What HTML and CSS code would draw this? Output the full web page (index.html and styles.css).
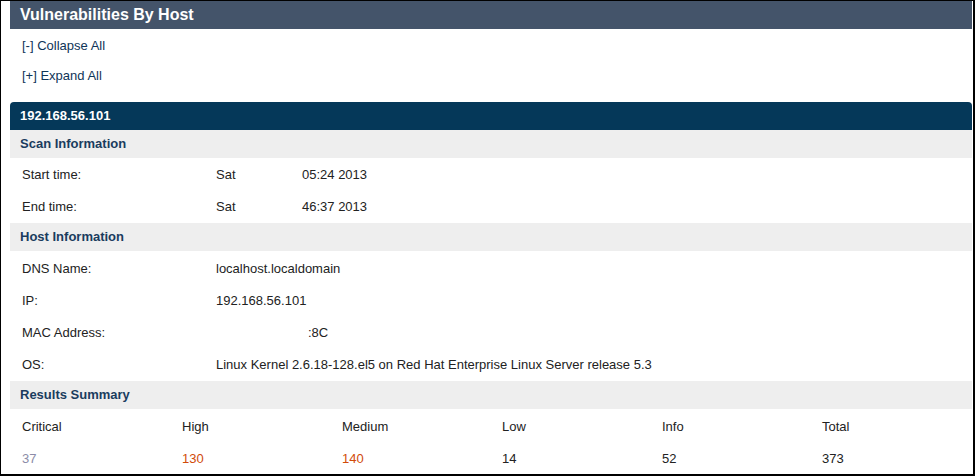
FILE: index.html
```html
<!DOCTYPE html>
<html>
<head>
<meta charset="utf-8">
<link rel="stylesheet" href="styles.css">
</head>
<body>
<div class="frame">
  <div class="title">Vulnerabilities By Host</div>
  <div class="links">
    <a class="link">[-] Collapse All</a>
    <a class="link">[+] Expand All</a>
  </div>
  <div class="host">
    <div class="host-bar">192.168.56.101</div>
    <div class="sec-head">Scan Information</div>
    <div class="sec-body first">
      <div class="row"><span class="lbl">Start time:</span><span class="day">Sat</span><span>05:24 2013</span></div>
      <div class="row"><span class="lbl">End time:</span><span class="day">Sat</span><span>46:37 2013</span></div>
    </div>
    <div class="sec-head">Host Information</div>
    <div class="sec-body">
      <div class="row"><span class="lbl">DNS Name:</span><span>localhost.localdomain</span></div>
      <div class="row"><span class="lbl">IP:</span><span>192.168.56.101</span></div>
      <div class="row"><span class="lbl">MAC Address:</span><span class="mac">:8C</span></div>
      <div class="row"><span class="lbl">OS:</span><span>Linux Kernel 2.6.18-128.el5 on Red Hat Enterprise Linux Server release 5.3</span></div>
    </div>
    <div class="sec-head">Results Summary</div>
    <div class="sec-body">
      <div class="grid">
        <span>Critical</span><span>High</span><span>Medium</span><span>Low</span><span>Info</span><span>Total</span>
        <span class="crit">37</span><span class="hi">130</span><span class="hi">140</span><span>14</span><span>52</span><span>373</span>
      </div>
    </div>
  </div>
</div>
</body>
</html>
```
FILE: styles.css
```css
* { box-sizing: border-box; }
html, body { margin: 0; padding: 0; background: #fff; }
body {
  font-family: "Liberation Sans", Arial, sans-serif;
  font-size: 13px;
  color: #222;
}
.frame {
  width: 975px;
  height: 476px;
  border-left: 1px solid #000;
  border-top: 1px solid #000;
  border-right: 2px solid #000;
  border-bottom: 2px solid #000;
  padding: 0 1px 0 9px;
  overflow: hidden;
}
.title {
  height: 28px;
  line-height: 28px;
  background: #44546a;
  color: #fff;
  font-weight: bold;
  font-size: 16px;
  padding-left: 10px;
}
.links {
  display: flex;
  flex-direction: column;
  padding: 2px 0 0 12px;
  margin-bottom: 11px;
}
.link {
  line-height: 30px;
  height: 30px;
  color: #0f3558;
}
.host-bar {
  height: 28px;
  line-height: 28px;
  background: #053859;
  color: #fff;
  font-weight: bold;
  padding-left: 10px;
  border-radius: 4px 4px 0 0;
}
.sec-head {
  height: 28px;
  line-height: 28px;
  background: #eeeeee;
  color: #1a3c5e;
  font-weight: bold;
  padding-left: 10px;
}
.sec-body { padding-top: 2px; }
.sec-body.first { padding-top: 1px; }
.row {
  display: flex;
  height: 32px;
  line-height: 32px;
  padding-left: 12px;
}
.lbl { width: 194px; }
.day { width: 86px; }
.mac { padding-left: 92px; }
.grid {
  display: grid;
  grid-template-columns: repeat(6, 160px);
  grid-auto-rows: 32px;
  line-height: 32px;
  padding-left: 12px;
}
.crit { color: #8c8ca8; }
.hi { color: #d14b0a; }
```
